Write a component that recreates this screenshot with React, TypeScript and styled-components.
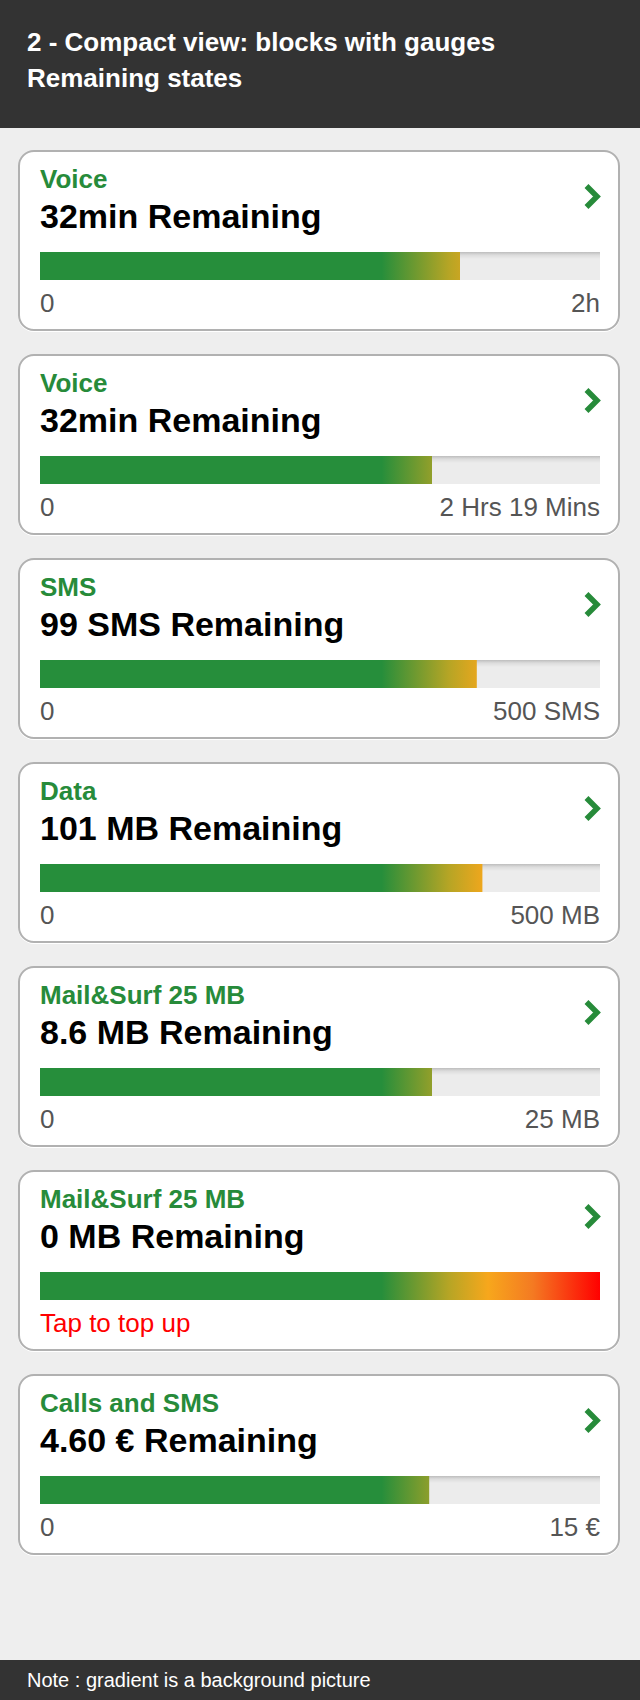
import React from "react";
import styled, { createGlobalStyle } from "styled-components";

const GlobalStyle = createGlobalStyle`
  html, body { margin: 0; padding: 0; background: #eeeeee; }
  body { font-family: "Liberation Sans", Arial, Helvetica, sans-serif; }
  * { box-sizing: border-box; }
`;

const Page = styled.div`
  min-height: 1700px;
  display: flex;
  flex-direction: column;
  background: #eeeeee;
`;

const Header = styled.header`
  height: 128px;
  background: #333333;
  color: #ffffff;
  padding: 24px 27px 0;
  font-size: 26px;
  font-weight: bold;
  line-height: 36px;
`;

const Main = styled.main`
  flex: 1;
  display: flex;
  flex-direction: column;
  gap: 23px;
  padding: 22px 20px 0 18px;
`;

const Card = styled.div`
  background: #ffffff;
  border: 2px solid #b1b1b1;
  border-radius: 16px;
  box-shadow: 0 1px 0 #ffffff;
  padding: 12px 18px 11px 20px;
  display: flex;
  flex-direction: column;
`;

const TopRow = styled.div`
  display: flex;
  align-items: center;
`;

const TextCol = styled.div`
  flex: 1;
  display: flex;
  flex-direction: column;
  gap: 2px;
`;

const Category = styled.div`
  color: #278b3a;
  font-size: 26px;
  font-weight: bold;
  line-height: 30px;
`;

const Amount = styled.div`
  color: #000000;
  font-size: 34px;
  font-weight: bold;
  line-height: 40px;
`;

const Chevron = styled.svg`
  width: 18px;
  height: 27px;
  margin-bottom: 8px;
  margin-right: -1px;
  flex: none;
`;

const Track = styled.div`
  margin-top: 16px;
  height: 28px;
  background: linear-gradient(to bottom, #bdbdbd 0px, #dcdcdc 3px, #ececec 7px, #ececec 100%);
  position: relative;
`;

const Fill = styled.div`
  height: 100%;
  background: linear-gradient(
    to right,
    #268e3b 0%,
    #268e3b 61%,
    #b6a525 73%,
    #f7a71c 80%,
    #f47a22 88%,
    #ff0000 100%
  );
`;

const Labels = styled.div`
  margin-top: 8px;
  display: flex;
  justify-content: space-between;
  font-size: 26px;
  line-height: 30px;
  color: #555555;
`;

const Alert = styled.div`
  margin-top: 8px;
  font-size: 26px;
  line-height: 30px;
  color: #ff0000;
`;

const Footer = styled.footer`
  height: 40px;
  background: #333333;
  color: #ffffff;
  font-size: 20px;
  line-height: 40px;
  padding: 0 27px;
`;

type Item = {
  category: string;
  amount: string;
  percent: number;
  max?: string;
  alert?: string;
};

const items: Item[] = [
  { category: "Voice", amount: "32min Remaining", percent: 75, max: "2h" },
  { category: "Voice", amount: "32min Remaining", percent: 70, max: "2 Hrs 19 Mins" },
  { category: "SMS", amount: "99 SMS Remaining", percent: 78, max: "500 SMS" },
  { category: "Data", amount: "101 MB Remaining", percent: 79, max: "500 MB" },
  { category: "Mail&Surf 25 MB", amount: "8.6 MB Remaining", percent: 70, max: "25 MB" },
  { category: "Mail&Surf 25 MB", amount: "0 MB Remaining", percent: 100, alert: "Tap to top up" },
  { category: "Calls and SMS", amount: "4.60 € Remaining", percent: 69.5, max: "15 €" },
];

function Gauge({ item }: { item: Item }) {
  return (
    <Card>
      <TopRow>
        <TextCol>
          <Category>{item.category}</Category>
          <Amount>{item.amount}</Amount>
        </TextCol>
        <Chevron viewBox="0 0 18 27">
          <polyline
            points="3.5,3 14,13.5 3.5,24"
            fill="none"
            stroke="#278b3a"
            strokeWidth="5.5"
            strokeLinejoin="miter"
          />
        </Chevron>
      </TopRow>
      <Track>
        <Fill style={{ clipPath: `inset(0 ${100 - item.percent}% 0 0)` }} />
      </Track>
      {item.alert ? (
        <Alert>{item.alert}</Alert>
      ) : (
        <Labels>
          <span>0</span>
          <span>{item.max}</span>
        </Labels>
      )}
    </Card>
  );
}

export default function App() {
  return (
    <Page>
      <GlobalStyle />
      <Header>
        <div>2 - Compact view: blocks with gauges</div>
        <div>Remaining states</div>
      </Header>
      <Main>
        {items.map((it, i) => (
          <Gauge key={i} item={it} />
        ))}
      </Main>
      <Footer>Note : gradient is a background picture</Footer>
    </Page>
  );
}
